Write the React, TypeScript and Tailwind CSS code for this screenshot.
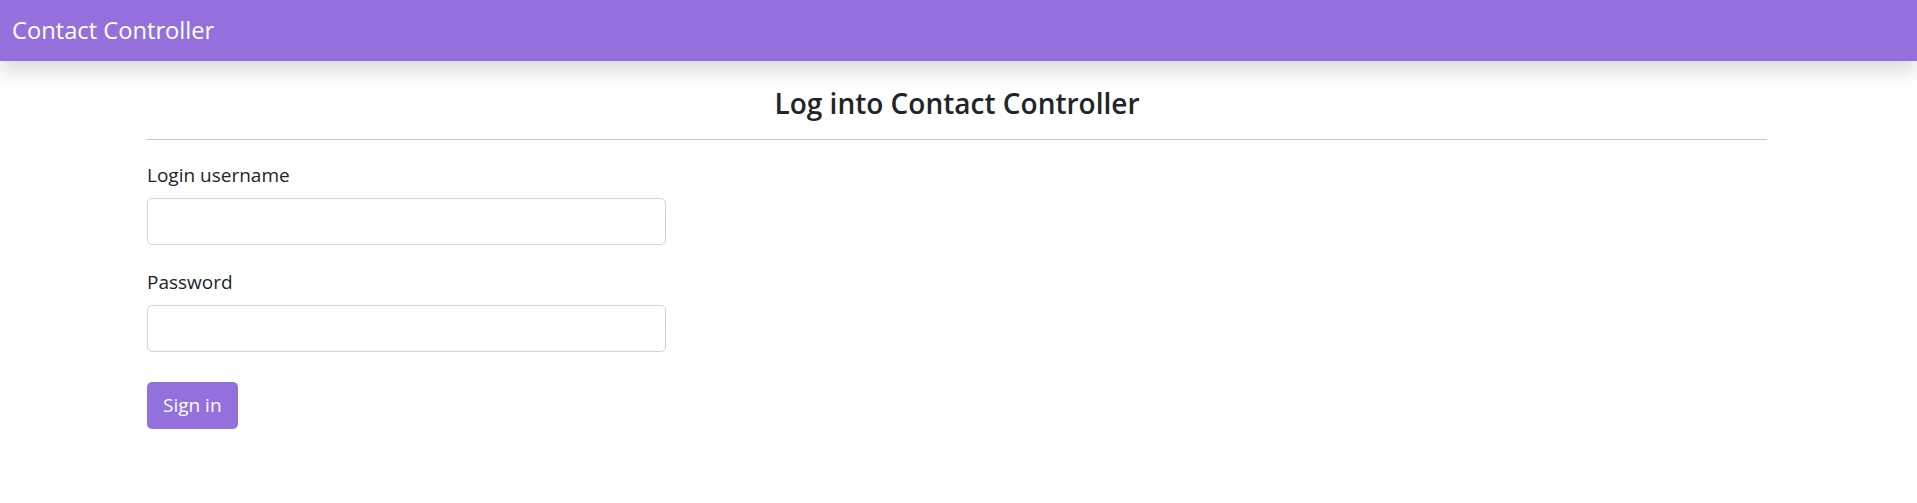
export default function App() {
  return (
    <div className="min-h-screen bg-white font-['Open_Sans',sans-serif] text-[#212529]">
      {/* NAVBAR */}
      <nav className="relative z-10 flex h-[61px] items-center bg-[#9370db] px-[12px] shadow-[0_10px_20px_rgba(0,0,0,0.15)]">
        <span className="text-[23.7px] leading-none text-white">Contact Controller</span>
      </nav>

      {/* LOGIN FORM */}
      <div className="pl-[147px] pr-[150px] pt-[24px]">
        <h4 className="text-center text-[28px] font-semibold leading-[36px]">Log into Contact Controller</h4>
        <hr className="mt-[18px] border-t border-[#c8c8c8]" />

        <form className="mt-[20px] w-[519px]" onSubmit={(e) => e.preventDefault()}>
          <div className="mb-[22px]">
            <label className="mb-[8px] block text-[19px] leading-[30px]">Login username</label>
            <input
              type="text"
              className="block h-[47px] w-full rounded-[5px] border border-[#ced4da] px-[15px] text-[19px] outline-none"
            />
          </div>
          <div className="mb-[30px]">
            <label className="mb-[8px] block text-[19px] leading-[30px]">Password</label>
            <input
              type="password"
              className="block h-[47px] w-full rounded-[5px] border border-[#ced4da] px-[15px] text-[19px] outline-none"
            />
          </div>
          <button
            type="submit"
            className="h-[47px] rounded-[5px] bg-[#9370db] px-[16px] text-[19px] text-white"
          >
            Sign in
          </button>
        </form>
      </div>
    </div>
  );
}
